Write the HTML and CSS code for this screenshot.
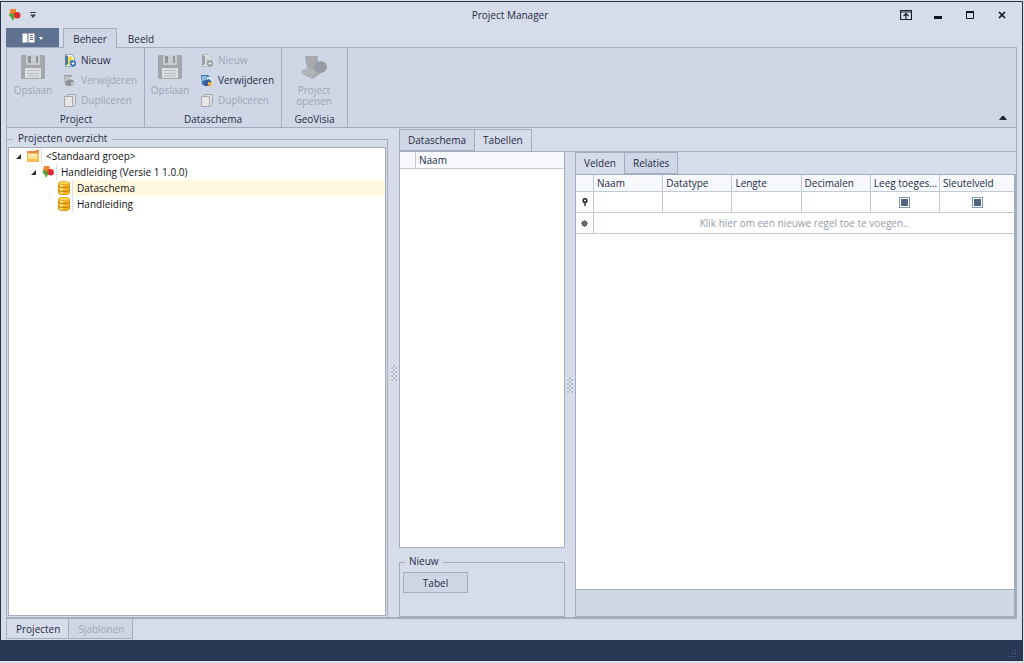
FILE: index.html
```html
<!DOCTYPE html>
<html lang="nl">
<head>
<meta charset="utf-8">
<title>Project Manager</title>
<link rel="stylesheet" href="styles.css">
</head>
<body>
<svg class="defs" aria-hidden="true">
  <symbol id="logo" viewBox="0 0 12 12"><path d="M2 0h5.500v6L1 5z" fill="#f0842f"/><path d="M0 6l3-2 4 3-3 5-1-3z" fill="#55a83e"/><circle cx="8.700" cy="6.300" r="3.200" fill="#dc2b30"/><path d="M3.500 4.500l3.500 1-1.500 3z" fill="#9a6a24"/></symbol>
  <symbol id="save" viewBox="0 0 24 24"><path d="M1 0h22l1 1v22l-1 1H1l-1-1V1z" fill="#a3a7ad"/><path d="M5 0h14v10H5z" fill="#c8cbd0"/><path d="M7 1h3v7H7zM15 1h2v7h-2z" fill="#92969c"/><path d="M4 13h16v10H4z" fill="#dcdee0"/><path d="M6 15.500h12M6 18.500h12M6 21h12" stroke="#b7bbc0"/></symbol>
  <symbol id="new" viewBox="0 0 12 13"><path d="M1.500.5h6l3 3v9h-9z" fill="#f4f6e6" stroke="#8fa6c0"/><path d="M1 1l3 1v8l-3 2z" fill="#55789c"/><path d="M4 3l4-1 1 6-5 4z" fill="#e4dc55"/><path d="M6 7l3-1 3 2v3l-3 2-3-2z" fill="#3b73ba"/><path d="M7.500 9.500h3M9 8v3" stroke="#fff"/></symbol>
  <symbol id="remove" viewBox="0 0 12 13"><path d="M0 1h7l2 2v8H1z" fill="#3978b4"/><path d="M1 2h5l-1 4-4 1z" fill="#8cbbe0"/><path d="M6 3h3l3 3v6H5z" fill="#dde7ef"/><path d="M3 7l5-2 3 3-3 4H3z" fill="#365f98"/><path d="M7 8h4v3l-2 1.500L7 11z" fill="#f1ae45"/></symbol>
  <symbol id="copy" viewBox="0 0 12 13"><path d="M3.500.5h8v10l-2 2h-6z" fill="#dfe0e1" stroke="#a4a7ac"/><path d="M.5 2.500h8v10h-8z" fill="#e7e7e6" stroke="#a4a7ac"/></symbol>
  <symbol id="db" viewBox="0 0 12 14"><path d="M.5 2v10c0 2 11 2 11 0V2" fill="#f4b51f" stroke="#e09a1c"/><path d="M2 3v9l3 .7V3.500z" fill="#ffe97a"/><path d="M.5 5c1 2 10 2 11 0M.5 9c1 2 10 2 11 0" fill="none" stroke="#c97812" stroke-width="1.200"/><ellipse cx="6" cy="2" rx="5.500" ry="1.500" fill="#ffdc5a" stroke="#e8aa2c"/></symbol>
  <symbol id="expand" viewBox="0 0 5 5"><path d="M5 0v5H0z" fill="#2b3037"/></symbol>
</svg>
<div class="window">
  <header class="titlebar">
    <div class="quick">
      <svg width="13" height="12"><use href="#logo"/></svg>
      <button class="plain" aria-label="Werkbalk aanpassen"><svg width="6" height="6"><path d="M0 .5h6" stroke="#333b4d"/><path d="M0 2.500h6L3 6z" fill="#333b4d"/></svg></button>
    </div>
    <h1>Project Manager</h1>
    <div class="controls">
      <button class="plain" aria-label="Lint weergeven"><svg width="12" height="10"><path d="M.5.5h11v9H.5zM0 2h12M6 9V4M3.500 6L6 3.500 8.500 6" fill="none" stroke="#1b222e" stroke-width="1.200"/></svg></button>
      <button class="plain" aria-label="Minimaliseren"><svg width="12" height="10"><path d="M2 6h8v3H2z" fill="#10151e"/></svg></button>
      <button class="plain" aria-label="Maximaliseren"><svg width="12" height="10"><path d="M2.500 1.500h7v7h-7z" fill="none" stroke="#10151e"/><path d="M2 1h8v2H2z" fill="#10151e"/></svg></button>
      <button class="plain" aria-label="Sluiten"><svg width="12" height="10"><path d="M3 2l6 6M9 2L3 8" stroke="#10151e" stroke-width="1.700"/></svg></button>
    </div>
  </header>
  <nav class="ribbon-tabs">
    <button class="app-button" aria-label="Menu"><svg width="22" height="10"><path d="M.5.500h5v9h-5zM6.500.500h6v9h-6z" fill="#fff"/><path d="M8 2.500h3M8 4.500h3M8 6.500h3" stroke="#5f7190"/><path d="M17 4h4l-2 3z" fill="#fff"/></svg></button>
    <button class="ribbon-tab active">Beheer</button>
    <button class="ribbon-tab">Beeld</button>
  </nav>
  <section class="ribbon">
    <div class="group group-wide">
      <div class="group-items">
        <button class="large" disabled><svg width="24" height="24"><use href="#save"/></svg>Opslaan</button>
        <div class="smalls">
          <button class="small"><svg width="12" height="13"><use href="#new"/></svg>Nieuw</button>
          <button class="small" disabled><svg class="gray" width="12" height="13"><use href="#remove"/></svg>Verwijderen</button>
          <button class="small" disabled><svg width="12" height="13"><use href="#copy"/></svg>Dupliceren</button>
        </div>
      </div>
      <h2>Project</h2>
    </div>
    <div class="group group-wide">
      <div class="group-items">
        <button class="large" disabled><svg width="24" height="24"><use href="#save"/></svg>Opslaan</button>
        <div class="smalls">
          <button class="small" disabled><svg class="gray" width="12" height="13"><use href="#new"/></svg>Nieuw</button>
          <button class="small"><svg width="12" height="13"><use href="#remove"/></svg>Verwijderen</button>
          <button class="small" disabled><svg width="12" height="13"><use href="#copy"/></svg>Dupliceren</button>
        </div>
      </div>
      <h2>Dataschema</h2>
    </div>
    <div class="group group-narrow">
      <div class="group-items">
        <button class="large wrap" disabled><svg width="28" height="24"><path d="M5 1h13v15l3 2-8 6-11-5 5-4z" fill="#a6a9ae"/><path d="M2 15l6-2 8 4-4 7-2-3-9-3z" fill="#b0b3b7"/><ellipse cx="20.500" cy="12" rx="6.500" ry="6" fill="#989ba1"/></svg>Project openen</button>
      </div>
      <h2>GeoVisia</h2>
    </div>
    <button class="plain collapse" aria-label="Lint samenvouwen"><svg width="8" height="4"><path d="M0 4l3-4h2l3 4z" fill="#222a38"/></svg></button>
  </section>

  <main class="workspace">
    <fieldset class="overview">
      <legend>Projecten overzicht</legend>
      <ul class="tree">
        <li class="row level-1"><svg width="5" height="5"><use href="#expand"/></svg><svg class="node-icon" width="12" height="12"><path d="M0 1h8l1-1h3v12H0z" fill="#f7bd52"/><path d="M0 1h8l1-1h3v3H0z" fill="#e98a45"/><path d="M1 4h9v5H1z" fill="#ffe08a"/><path d="M1 4h9v2H1z" fill="#fff0c5"/></svg><span>&lt;Standaard groep&gt;</span></li>
        <li class="row level-2"><svg width="5" height="5"><use href="#expand"/></svg><svg class="node-icon" width="12" height="12"><use href="#logo"/></svg><span>Handleiding (Versie 1 1.0.0)</span></li>
        <li class="row level-3"><svg class="node-icon" width="12" height="14"><use href="#db"/></svg><span class="selected">Dataschema</span></li>
        <li class="row level-3"><svg class="node-icon" width="12" height="14"><use href="#db"/></svg><span>Handleiding</span></li>
      </ul>
    </fieldset>
    <div class="splitter"><i class="grip"></i></div>
    <section class="detail">
      <nav class="tabs">
        <button class="tab idle">Dataschema</button>
        <button class="tab">Tabellen</button>
      </nav>
      <div class="detail-page">
        <div class="tables">
          <div class="table-list">
            <table class="grid">
              <colgroup><col class="col-mark"><col></colgroup>
              <thead><tr><th></th><th>Naam</th></tr></thead>
            </table>
          </div>
          <fieldset class="create">
            <legend>Nieuw</legend>
            <button class="push">Tabel</button>
          </fieldset>
        </div>
        <div class="splitter"><i class="grip"></i></div>
        <div class="fields">
          <nav class="tabs">
            <button class="tab">Velden</button>
            <button class="tab idle">Relaties</button>
          </nav>
          <div class="field-page">
            <table class="grid">
              <colgroup><col class="col-mark"><col class="col"><col class="col"><col class="col"><col class="col"><col class="col"><col></colgroup>
              <thead><tr><th></th><th>Naam</th><th>Datatype</th><th>Lengte</th><th>Decimalen</th><th>Leeg toeges...</th><th>Sleutelveld</th></tr></thead>
              <tbody>
                <tr class="filter">
                  <td class="mark"><svg width="6" height="8"><circle cx="3" cy="2.500" r="1.800" fill="none" stroke="#252a31" stroke-width="1.600"/><path d="M3 4v4" stroke="#252a31" stroke-width="1.400"/></svg></td>
                  <td><input type="text" aria-label="Filter Naam"></td>
                  <td><input type="text" aria-label="Filter Datatype"></td>
                  <td><input type="text" aria-label="Filter Lengte"></td>
                  <td><input type="text" aria-label="Filter Decimalen"></td>
                  <td><input type="checkbox" aria-label="Leeg toegestaan"></td>
                  <td><input type="checkbox" aria-label="Sleutelveld"></td>
                </tr>
                <tr class="new-row">
                  <td class="mark"><svg width="7" height="7"><circle cx="3.500" cy="3.500" r="2.700" fill="#555b63"/><path d="M3.500 0v7M0 3.500h7M1 1l5 5M6 1L1 6" stroke="#686e76"/></svg></td>
                  <td colspan="6">Klik hier om een nieuwe regel toe te voegen..</td>
                </tr>
              </tbody>
            </table>
            <div class="grid-footer"></div>
          </div>
        </div>
      </div>
    </section>
  </main>
  <nav class="bottom-tabs">
    <button class="bottom-tab">Projecten</button>
    <button class="bottom-tab" disabled>Sjablonen</button>
  </nav>
  <footer class="status"><svg width="8" height="8"><path d="M6 0h1v1H6zM3 3h1v1H3zM6 3h1v1H6zM0 6h1v1H0zM3 6h1v1H3zM6 6h1v1H6z" fill="#5f6d88"/></svg></footer>
</div>
</body>
</html>
```
FILE: styles.css
```css
* { box-sizing: border-box; }
body {
  --line: #a3adc0;
  --light: #d6dcea;
  --panel: #cfd7e6;
  --off: #9da5b4;
  margin: 0;
  padding: 1px 1px 2px 0;
  min-height: 100vh;
  display: flex;
  background: #dce2e9;
  color: #1f2b43;
  font: 10px/14px "Open Sans", "Noto Sans", sans-serif;
}
.defs { position: absolute; width: 0; height: 0; }
svg { display: block; flex: none; }
h1, h2 { margin: 0; font: inherit; }
button { margin: 0; padding: 0; border: 0; background: none; color: inherit; font: inherit; }
button:disabled { color: var(--off); }
fieldset { margin: 0; min-width: 0; border: 1px solid var(--line); }
legend { margin-left: 5px; padding: 0 5px; height: 14px; line-height: 12px; }
.gray { filter: grayscale(1); opacity: .55; }

.window {
  flex: 1;
  min-width: 0;
  display: flex;
  flex-direction: column;
  border: 1px solid #273349;
  background: var(--light);
}
.titlebar {
  display: grid;
  grid-template-columns: 1fr auto 1fr;
  align-items: center;
  height: 26px;
  padding: 0 14px 0 11px;
}
.quick { display: flex; align-items: center; gap: 9px; margin-left: -4px; }
.controls { display: flex; justify-content: flex-end; gap: 20px; }

.ribbon-tabs { display: flex; height: 19px; margin: 0 5px; }
.app-button { display: grid; place-items: center; width: 53px; background: #5f7190; }
.ribbon-tab { width: 48px; padding-top: 2px; }
.ribbon-tab.active {
  width: 54px;
  height: 20px;
  margin-left: 4px;
  padding-bottom: 1px;
  border: 1px solid var(--line);
  border-bottom: 0;
  background: var(--panel);
  position: relative;
}
.ribbon {
  display: flex;
  height: 81px;
  margin: 0 5px;
  padding-left: 1px;
  border: 1px solid var(--line);
  background: var(--panel);
}
.group { display: flex; flex-direction: column; border-right: 1px solid var(--line); text-align: center; }
.group-wide { width: 137px; }
.group-narrow { width: 66px; }
.group-items { display: flex; flex: 1; padding: 2px 0 0 3px; }
.group h2 { height: 15px; }
.large { display: flex; flex-direction: column; align-items: center; width: 44px; padding-top: 5px; gap: 6px; line-height: 11px; }
.large.wrap { width: 58px; }
.smalls { display: flex; flex-direction: column; padding-left: 9px; }
.small { display: flex; align-items: center; gap: 5px; height: 20px; }
.collapse { align-self: flex-end; margin: 0 9px 7px auto; }

.workspace {
  flex: 1;
  min-height: 0;
  display: grid;
  grid-template-columns: minmax(0, 381fr) 11px minmax(0, 617fr);
  margin: 0 5px;
  border: solid var(--line);
  border-width: 0 1px 2px;
}
.overview { display: flex; margin: 4px 0 0; padding: 1px; border-width: 1px 1px 0 0; }
.tree { flex: 1; margin: 0; padding: 0; border: 1px solid var(--line); background: #fff; list-style: none; }
.row { display: flex; align-items: center; height: 16px; color: #111; }
.row span { flex: 1; padding-left: 4px; line-height: 16px; border-left: 1px solid #dadfe8; }
.row .selected { background: #fff7de; }
.node-icon { margin: 0 2px 0 6px; }
.level-1 { padding-left: 7px; }
.level-2 { padding-left: 22px; }
.level-3 { padding-left: 43px; }
.splitter { display: grid; place-items: center; }
.grip {
  width: 6px;
  height: 16px;
  background: repeating-conic-gradient(#aeb7c8 0 25%, #e4e8f1 0 50%) 0 0 / 4px 4px;
}
.detail { display: flex; flex-direction: column; padding-top: 1px; }
.tabs { display: flex; flex: none; height: 22px; background: var(--light); }
.tab { padding: 0 8px 1px; border: solid var(--line); border-width: 1px 1px 0 0; }
.tab:first-child { border-left-width: 1px; }
.tab.idle { padding-bottom: 0; background: var(--panel); border-bottom-width: 1px; }
.detail-page {
  flex: 1;
  min-height: 0;
  display: grid;
  grid-template-columns: minmax(0, 166fr) 10px minmax(0, 441fr);
  border-top: 1px solid var(--line);
}
.tables { display: flex; flex-direction: column; gap: 7px; }
.table-list { flex: 1; border: solid var(--line); border-width: 0 1px 1px; background: #fff; }
.create { height: 62px; padding: 3px; }
.create legend { margin-left: 2px; padding: 0 4px; }
.push { display: block; width: 65px; height: 21px; border: 1px solid var(--line); background: var(--panel); }

.fields { display: flex; flex-direction: column; }
.field-page {
  flex: 1;
  display: flex;
  flex-direction: column;
  border: solid var(--line);
  border-width: 1px 2px 1px 1px;
  background: #fff;
}
.grid { width: 100%; table-layout: fixed; border-collapse: separate; border-spacing: 0; }
.col-mark { width: 18px; }
.table-list .col-mark { width: 16px; }
.col { width: 15.8%; }
.grid th, .grid td { padding: 0; border: solid #c3cad7; border-width: 0 1px 1px 0; }
.grid th:last-child, .grid td:last-child { border-right: 0; }
.grid th {
  height: 17px;
  padding-left: 3px;
  overflow: hidden;
  background: #f7f9fd;
  font-weight: 400;
  text-align: left;
  text-overflow: ellipsis;
  white-space: nowrap;
}
.filter td { height: 21px; text-align: center; }
.new-row td { height: 21px; color: #939baa; text-align: center; }
.grid .mark svg { margin: auto; }
input[type="text"] { display: block; width: 100%; height: 18px; padding: 0 3px; border: 0; background: none; font: inherit; }
input[type="checkbox"] {
  display: block;
  width: 11px;
  height: 11px;
  margin: auto;
  appearance: none;
  border: 1px solid #8296b5;
  background: #52647f;
  box-shadow: inset 0 0 0 1px #fff;
}
.grid-footer { height: 27px; margin-top: auto; border-top: 1px solid var(--line); background: var(--panel); }

.bottom-tabs { display: flex; height: 20px; margin: 0 5px 1px; }
.bottom-tab { padding: 0 8px 0 9px; border: solid var(--line); border-width: 0 1px 1px 0; }
.bottom-tab:first-child { border-left-width: 1px; }
.bottom-tab:disabled { background: var(--panel); }
.status { display: flex; justify-content: flex-end; align-items: flex-end; height: 20px; padding: 0 5px 2px; background: #293854; }
```
